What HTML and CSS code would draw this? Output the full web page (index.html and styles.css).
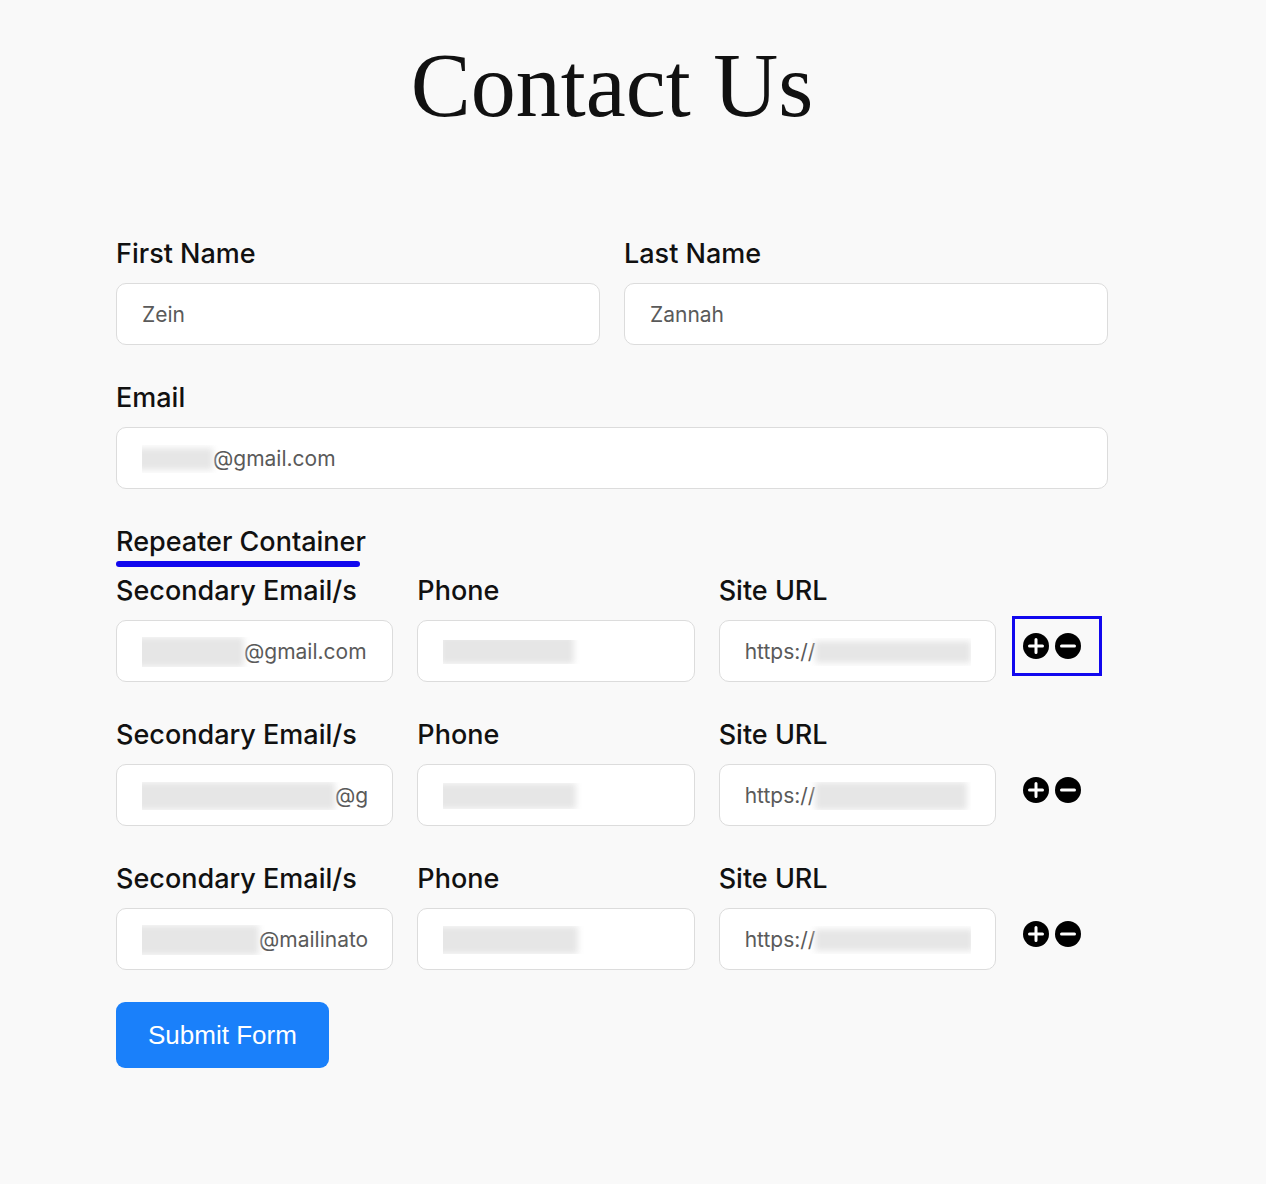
FILE: index.html
```html
<!DOCTYPE html>
<html lang="en">
<head>
<meta charset="utf-8">
<title>Contact Us</title>
<link rel="stylesheet" href="styles.css">
</head>
<body>
<main class="page">
  <h1 class="title">Contact Us</h1>
  <form class="form">
    <div class="row-two">
      <div class="group">
        <label class="label">First Name</label>
        <div class="field"><div class="field-inner">Zein</div></div>
      </div>
      <div class="group">
        <label class="label">Last Name</label>
        <div class="field"><div class="field-inner">Zannah</div></div>
      </div>
    </div>
    <div class="group group-gap">
      <label class="label">Email</label>
      <div class="field"><div class="field-inner"><span class="blur b-email"></span>@gmail.com</div></div>
    </div>

    <div class="repeater">
      <div class="repeater-title">Repeater Container</div>
      <div class="repeater-bar"></div>

      <div class="rep-row">
        <div class="rep-fields">
          <div class="group">
            <label class="label">Secondary Email/s</label>
            <div class="field"><div class="field-inner"><span class="blur b-se1"></span>@gmail.com</div></div>
          </div>
          <div class="group">
            <label class="label">Phone</label>
            <div class="field"><div class="field-inner"><span class="blur b-ph1"></span></div></div>
          </div>
          <div class="group">
            <label class="label">Site URL</label>
            <div class="field"><div class="field-inner">https://<span class="blur b-url1"></span></div></div>
          </div>
        </div>
        <div class="rep-actions active">
          <svg class="icon" viewBox="0 0 26 26"><circle cx="13" cy="13" r="13"/><path d="M6.5 13h13M13 6.5v13"/></svg>
          <svg class="icon" viewBox="0 0 26 26"><circle cx="13" cy="13" r="13"/><path d="M6.5 13h13"/></svg>
        </div>
      </div>

      <div class="rep-row">
        <div class="rep-fields">
          <div class="group">
            <label class="label">Secondary Email/s</label>
            <div class="field"><div class="field-inner"><span class="blur b-se2"></span>@gmail.com</div></div>
          </div>
          <div class="group">
            <label class="label">Phone</label>
            <div class="field"><div class="field-inner"><span class="blur b-ph2"></span></div></div>
          </div>
          <div class="group">
            <label class="label">Site URL</label>
            <div class="field"><div class="field-inner">https://<span class="blur b-url2"></span></div></div>
          </div>
        </div>
        <div class="rep-actions">
          <svg class="icon" viewBox="0 0 26 26"><circle cx="13" cy="13" r="13"/><path d="M6.5 13h13M13 6.5v13"/></svg>
          <svg class="icon" viewBox="0 0 26 26"><circle cx="13" cy="13" r="13"/><path d="M6.5 13h13"/></svg>
        </div>
      </div>

      <div class="rep-row">
        <div class="rep-fields">
          <div class="group">
            <label class="label">Secondary Email/s</label>
            <div class="field"><div class="field-inner"><span class="blur b-se3"></span>@mailinator.com</div></div>
          </div>
          <div class="group">
            <label class="label">Phone</label>
            <div class="field"><div class="field-inner"><span class="blur b-ph3"></span></div></div>
          </div>
          <div class="group">
            <label class="label">Site URL</label>
            <div class="field"><div class="field-inner">https://<span class="blur b-url3"></span></div></div>
          </div>
        </div>
        <div class="rep-actions">
          <svg class="icon" viewBox="0 0 26 26"><circle cx="13" cy="13" r="13"/><path d="M6.5 13h13M13 6.5v13"/></svg>
          <svg class="icon" viewBox="0 0 26 26"><circle cx="13" cy="13" r="13"/><path d="M6.5 13h13"/></svg>
        </div>
      </div>
    </div>

    <button type="button" class="submit">Submit Form</button>
  </form>
</main>
</body>
</html>
```

FILE: styles.css
```css
html, body {
  margin: 0;
  padding: 0;
  background: #f9f9f9;
}

body {
  font-family: Inter, "Noto Sans", "Liberation Sans", sans-serif;
  color: #111111;
}

.page {
  width: 992px;
  margin-left: 116px;
  padding-top: 41px;
}

.title {
  margin: 0;
  text-align: center;
  font-family: "Liberation Serif", "DejaVu Serif", serif;
  font-weight: 400;
  font-size: 90px;
  line-height: 90px;
  color: #111111;
}

.form {
  margin-top: 107px;
  display: flex;
  flex-direction: column;
}

.row-two {
  display: grid;
  grid-template-columns: 1fr 1fr;
  column-gap: 24px;
}

.group {
  display: flex;
  flex-direction: column;
  min-width: 0;
}

.group-gap {
  margin-top: 37px;
}

.label {
  display: block;
  font-size: 27px;
  line-height: 32px;
  font-weight: 500;
  color: #111111;
  margin-bottom: 13px;
}

.field {
  box-sizing: border-box;
  height: 62px;
  background: #ffffff;
  border: 1px solid #dcdcdc;
  border-radius: 10px;
  padding: 2px 24px 0 25px;
  display: flex;
  align-items: center;
}

.field-inner {
  width: 100%;
  overflow: hidden;
  white-space: nowrap;
  font-size: 21px;
  line-height: 28px;
  color: #5a5a5a;
  display: flex;
  align-items: center;
}

.blur {
  display: inline-block;
  flex: none;
  background: #e6e6e6;
  filter: blur(3px);
}

.b-email { width: 76px; height: 22px; margin-left: -5px; }
.b-se1 { width: 108px; height: 30px; margin-left: -6px; }
.b-ph1 { width: 134px; height: 28px; margin-left: -3px; margin-top: -4px; }
.b-url1 { width: 156px; height: 22px; }
.b-se2 { width: 198px; height: 28px; margin-left: -5px; }
.b-ph2 { width: 138px; height: 26px; margin-left: -5px; }
.b-url2 { width: 152px; height: 28px; }
.b-se3 { width: 124px; height: 30px; margin-left: -7px; }
.b-ph3 { width: 142px; height: 28px; margin-left: -7px; }
.b-url3 { width: 158px; height: 22px; }

.repeater {
  margin-top: 37px;
  display: flex;
  flex-direction: column;
}

.repeater-title {
  font-size: 27px;
  line-height: 32px;
  font-weight: 500;
  color: #111111;
}

.repeater-bar {
  margin-top: 3px;
  width: 244px;
  height: 6px;
  border-radius: 4px;
  background: #1208ee;
}

.rep-row {
  display: flex;
  align-items: flex-end;
  margin-top: 37px;
}

.repeater-bar + .rep-row {
  margin-top: 8px;
}

.rep-fields {
  width: 880px;
  display: grid;
  grid-template-columns: repeat(3, minmax(0, 1fr));
  column-gap: 24px;
}

.rep-actions {
  box-sizing: border-box;
  margin-left: 16px;
  margin-bottom: 6px;
  width: 90px;
  height: 60px;
  border: 3px solid transparent;
  padding-left: 8px;
  display: flex;
  align-items: center;
  gap: 6px;
}

.rep-actions.active {
  border-color: #1208ee;
}

.icon {
  width: 26px;
  height: 26px;
  display: block;
}

.icon circle {
  fill: #000000;
}

.icon path {
  stroke: #ffffff;
  stroke-width: 3;
  stroke-linecap: round;
  fill: none;
}

.submit {
  margin-top: 32px;
  align-self: flex-start;
  height: 66px;
  padding: 0 32px;
  border: none;
  border-radius: 9px;
  background: #1a80fa;
  color: #ffffff;
  font-family: "Liberation Sans", Arial, sans-serif;
  font-size: 26px;
  cursor: pointer;
}
```
